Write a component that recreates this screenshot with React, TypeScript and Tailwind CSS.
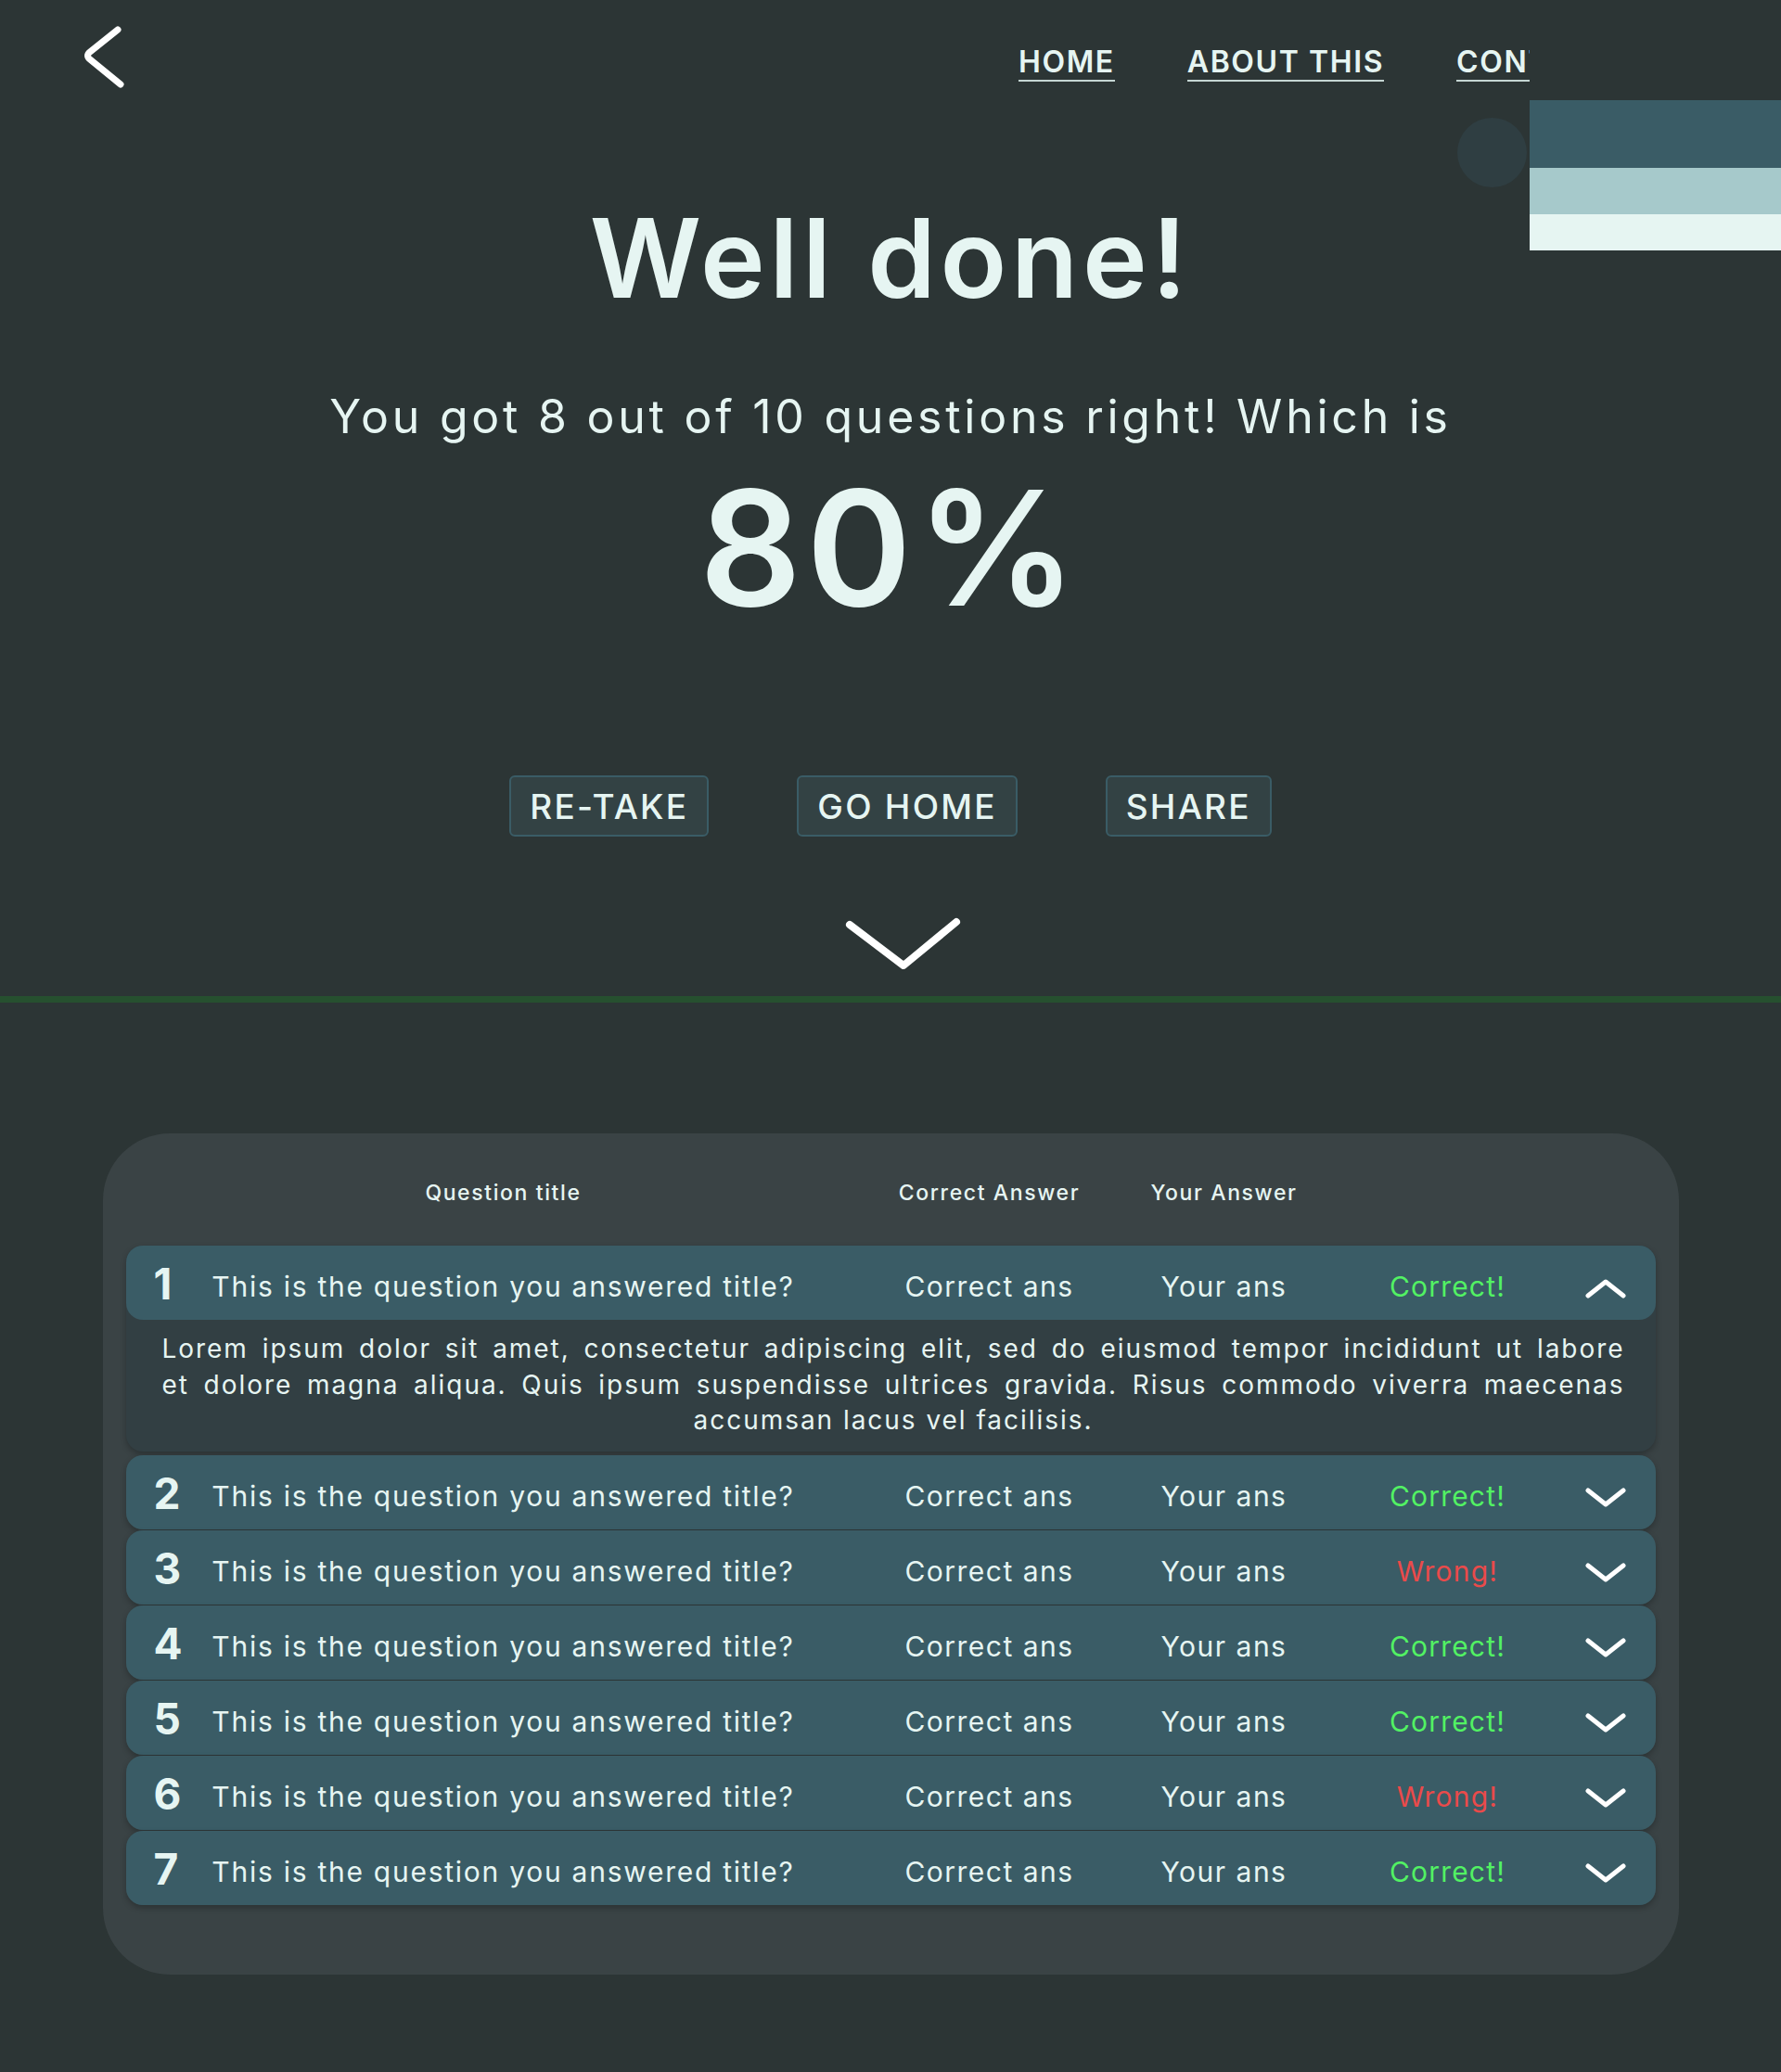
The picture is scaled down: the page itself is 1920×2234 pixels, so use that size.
const font = { fontFamily: "Inter, 'Open Sans', sans-serif" };

type Result = { n: number; ok: boolean; open?: boolean };

const results: Result[] = [
  { n: 1, ok: true, open: true },
  { n: 2, ok: true },
  { n: 3, ok: false },
  { n: 4, ok: true },
  { n: 5, ok: true },
  { n: 6, ok: false },
  { n: 7, ok: true },
];

function RowChevron({ up }: { up?: boolean }) {
  return (
    <svg width="44" height="24" viewBox="0 0 44 24" className="mt-[4px]">
      <polyline
        points={up ? "3,20 22,5 41,20" : "3,4 22,19 41,4"}
        fill="none"
        stroke="white"
        strokeWidth="5"
        strokeLinecap="round"
        strokeLinejoin="round"
      />
    </svg>
  );
}

function Columns({ children }: { children: React.ReactNode[] }) {
  return (
    <div className="flex items-center">
      <div className="w-[80px] pl-[30px]">{children[0]}</div>
      <div className="w-[654px] text-center">{children[1]}</div>
      <div className="ml-[97px] w-[200px] text-center">{children[2]}</div>
      <div className="ml-[53px] w-[200px] text-center">{children[3]}</div>
      <div className="ml-[41px] w-[200px] text-center">{children[4]}</div>
      <div className="ml-[30px] w-[80px] flex justify-center">{children[5]}</div>
    </div>
  );
}

function ResultRow({ r }: { r: Result }) {
  return (
    <div
      className={
        r.open
          ? "rounded-[18px] bg-[#323f43] mb-[3px] shadow-[0_3px_6px_rgba(0,0,0,0.25)]"
          : "rounded-[18px] shadow-[0_3px_6px_rgba(0,0,0,0.25)]"
      }
    >
      <div className="h-[80px] pt-[8px] flex items-center rounded-[18px] bg-[#3a5c66] text-[#e6f5f2] leading-none">
        <Columns>
          {[
            <span key="n" className="text-[46px] font-bold relative -top-[3px]">{r.n}</span>,
            <span key="q" className="text-[30px] tracking-[0.058em]">This is the question you answered title?</span>,
            <span key="c" className="text-[30px] tracking-[0.05em]">Correct ans</span>,
            <span key="y" className="text-[30px] tracking-[0.05em]">Your ans</span>,
            r.ok ? (
              <span key="s" className="text-[30px] tracking-[0.04em] text-[#52f263]">Correct!</span>
            ) : (
              <span key="s" className="text-[30px] tracking-[0.04em] text-[#ea4a4a]">Wrong!</span>
            ),
            <RowChevron key="ch" up={r.open} />,
          ]}
        </Columns>
      </div>
      {r.open && (
        <div className="pt-[12px] pb-[14px] pl-[39px] pr-[33px] text-[28px] leading-[38.5px] tracking-[0.07em] text-[#e6f5f2]">
          <span className="block whitespace-nowrap text-justify [text-align-last:justify]">
            Lorem ipsum dolor sit amet, consectetur adipiscing elit, sed do eiusmod tempor incididunt ut labore
          </span>
          <span className="block whitespace-nowrap text-justify [text-align-last:justify]">
            et dolore magna aliqua. Quis ipsum suspendisse ultrices gravida. Risus commodo viverra maecenas
          </span>
          <span className="block text-center">accumsan lacus vel facilisis.</span>
        </div>
      )}
    </div>
  );
}

export default function App() {
  return (
    <div className="relative min-h-screen bg-[#2c3535] text-[#e6f5f2] overflow-hidden" style={font}>
      {/* decoration top right */}
      <div className="absolute right-0 top-[108px] w-[271px] flex flex-col">
        <div className="h-[73px] bg-[#3a5c66]" />
        <div className="h-[50px] bg-[#a6c9cb]" />
        <div className="h-[39px] bg-[#e6f5f2]" />
      </div>
      <div className="absolute left-[1571px] top-[127px] w-[75px] h-[75px] rounded-full bg-[#2f3e42]" />

      <header className="flex items-start h-[110px]">
        <svg width="50" height="72" viewBox="0 0 50 72" className="ml-[86px] mt-[25px]">
          <path
            d="M41 7 L11 31 Q6 35 11 39 L44 66"
            fill="none"
            stroke="white"
            strokeWidth="7"
            strokeLinecap="round"
            strokeLinejoin="round"
          />
        </svg>
        <nav className="ml-auto mr-[271px] w-[551px] overflow-hidden whitespace-nowrap flex gap-[78px] pt-[51px] text-[32px] font-semibold leading-none tracking-[0.05em]">
          <a className="pb-[3px] border-b-2 border-[#c5d6d3]">HOME</a>
          <a className="pb-[3px] border-b-2 border-[#c5d6d3]">ABOUT THIS</a>
          <a className="pb-[3px] border-b-2 border-[#c5d6d3]">CONTACT</a>
        </nav>
      </header>

      <main className="flex flex-col items-center text-center">
        <h1 className="mt-[109px] text-[118px] font-semibold leading-none tracking-[0.04em]">Well done!</h1>
        <p className="mt-[87px] text-[50px] leading-none tracking-[0.075em]">
          You got 8 out of 10 questions right! Which is
        </p>
        <p className="mt-[30px] text-[172px] font-semibold leading-none tracking-[0.03em]">80%</p>

        <div className="mt-[160px] flex gap-[95px]">
          {["RE-TAKE", "GO HOME", "SHARE"].map((b) => (
            <button
              key={b}
              className="h-[66px] px-[20px] rounded-[6px] border-2 border-[#3a5c66] bg-[#334244] text-[37px] leading-none font-medium tracking-[0.06em]"
            >
              {b}
            </button>
          ))}
        </div>

        <div className="mt-[86px] pl-[27px]">
          <svg width="131" height="58" viewBox="0 0 131 58">
            <polyline
              points="8,9 66,53 123,6"
              fill="none"
              stroke="white"
              strokeWidth="8"
              strokeLinecap="round"
              strokeLinejoin="round"
            />
          </svg>
        </div>
      </main>

      <div className="mt-[28px] h-[7px] bg-[#26502f]" />

      <section className="mx-auto mt-[141px] mb-[107px] w-[1699px] rounded-[72px] bg-[#3a4345] px-[25px] pt-[53px] pb-[75px]">
        <div className="mb-[45px] text-[23px] font-medium leading-none tracking-[0.07em]">
          <Columns>
            {[
              <span key="a" />,
              <span key="b">Question title</span>,
              <span key="c">Correct Answer</span>,
              <span key="d">Your Answer</span>,
              <span key="e" />,
              <span key="f" />,
            ]}
          </Columns>
        </div>
        <div className="flex flex-col gap-[1px]">
          {results.map((r) => (
            <ResultRow key={r.n} r={r} />
          ))}
        </div>
      </section>
    </div>
  );
}
